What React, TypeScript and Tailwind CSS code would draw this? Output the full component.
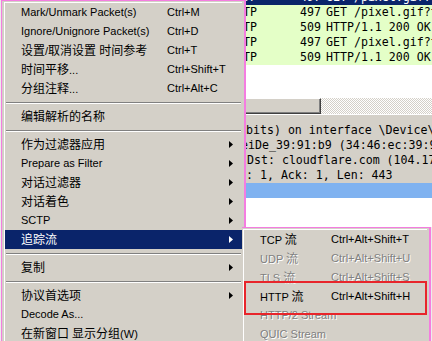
import React from 'react';

type Item =
  | { sep: true }
  | { sep?: false; label: string; keys?: string; sub?: boolean; active?: boolean; off?: boolean };

const mainItems: Item[] = [
  { label: 'Mark/Unmark Packet(s)', keys: 'Ctrl+M' },
  { label: 'Ignore/Unignore Packet(s)', keys: 'Ctrl+D' },
  { label: '设置/取消设置 时间参考', keys: 'Ctrl+T' },
  { label: '时间平移...', keys: 'Ctrl+Shift+T' },
  { label: '分组注释...', keys: 'Ctrl+Alt+C' },
  { sep: true },
  { label: '编辑解析的名称' },
  { sep: true },
  { label: '作为过滤器应用', sub: true },
  { label: 'Prepare as Filter', sub: true },
  { label: '对话过滤器', sub: true },
  { label: '对话着色', sub: true },
  { label: 'SCTP', sub: true },
  { label: '追踪流', sub: true, active: true },
  { sep: true },
  { label: '复制', sub: true },
  { sep: true },
  { label: '协议首选项', sub: true },
  { label: 'Decode As...' },
  { label: '在新窗口 显示分组(W)' },
];

const streamItems: Item[] = [
  { label: 'TCP 流', keys: 'Ctrl+Alt+Shift+T' },
  { label: 'UDP 流', keys: 'Ctrl+Alt+Shift+U', off: true },
  { label: 'TLS 流', keys: 'Ctrl+Alt+Shift+S', off: true },
  { label: 'HTTP 流', keys: 'Ctrl+Alt+Shift+H' },
  { label: 'HTTP/2 Stream', off: true },
  { label: 'QUIC Stream', off: true },
];

const packets = [
  { proto: 'HTTP', len: '497', info: 'GET /pixel.gif?type=log HTTP/1.1', sel: true },
  { proto: 'HTTP', len: '497', info: 'GET /pixel.gif?type=log HTTP/1.1' },
  { proto: 'HTTP', len: '509', info: 'HTTP/1.1 200 OK  (GIF89a)' },
  { proto: 'HTTP', len: '497', info: 'GET /pixel.gif?type=log HTTP/1.1' },
  { proto: 'HTTP', len: '509', info: 'HTTP/1.1 200 OK  (GIF89a)' },
];

const details = [
  { pad: 'pl-[246px]', text: 'bits) on interface \\Device\\NPF_{7B2E}' },
  { pad: 'pl-[241px]', text: 'eiDe_39:91:b9 (34:46:ec:39:91:b9)' },
  { pad: 'pl-[247px]', text: 'Dst: cloudflare.com (104.17.24.14)' },
  { pad: 'pl-[239px]', text: 'q: 1, Ack: 1, Len: 443' },
];

function Txt({ s }: { s: string }) {
  const parts = s.split(/([\u4e00-\u9fff]+)/);
  return (
    <>
      {parts.map((p, i) =>
        /[\u4e00-\u9fff]/.test(p) ? (
          <span key={i} className="text-[12px]">
            {p}
          </span>
        ) : (
          <React.Fragment key={i}>{p}</React.Fragment>
        )
      )}
    </>
  );
}

function Arrow() {
  return (
    <svg width="4" height="7" viewBox="0 0 4 7" className="ml-auto mr-[9px] shrink-0">
      <path d="M0 0L4 3.5L0 7Z" fill="currentColor" />
    </svg>
  );
}

function Separator() {
  return (
    <div className="flex h-[9px] items-center px-px">
      <div className="h-[2px] w-full border-t border-b border-t-[#808080] border-b-white" />
    </div>
  );
}

function MenuRow({ item, labelW, pad }: { item: Item; labelW: string; pad: string }) {
  if (item.sep) return <Separator />;
  const tone = item.active
    ? 'bg-[#0a246a] text-white'
    : item.off
      ? 'text-[#808080] [text-shadow:1px_1px_0_#ffffff]'
      : 'text-black';
  return (
    <div className={`flex h-[19px] items-center whitespace-nowrap leading-none ${pad} ${tone}`}>
      <span className={`${labelW} shrink-0`}>
        <Txt s={item.label} />
      </span>
      {item.keys && <span>{item.keys}</span>}
      {item.sub && <Arrow />}
    </div>
  );
}

export default function App() {
  return (
    <div className="relative h-[341px] w-[432px] overflow-hidden bg-white font-['Liberation_Sans','Noto_Sans_CJK_SC',sans-serif] text-[11px]">
      {/* wireshark window behind the menus */}
      <div className="flex h-full flex-col font-['DejaVu_Sans_Mono',monospace] text-[11.6px] leading-none">
        <div className="-mt-[10px]">
          {packets.map((p, i) => (
            <div
              key={i}
              className={`flex h-[15px] items-center whitespace-nowrap ${
                p.sel ? 'bg-[#0a246a] text-white' : 'bg-[#e4ffc7] text-black'
              }`}
            >
              <span className="w-[229px] shrink-0" />
              <span className="w-[28px] shrink-0">{p.proto}</span>
              <span className="w-[64px] shrink-0 text-right">{p.len}</span>
              <span className="ml-[5px]">{p.info}</span>
            </div>
          ))}
        </div>
        <div className="h-[33px] shrink-0 bg-white" />
        <div className="flex h-[16px] shrink-0">
          <div className="w-[321px] shrink-0 border border-t-white border-l-white border-r-[#404040] border-b-[#404040] bg-[#d4d0c8] shadow-[inset_-1px_-1px_0_#808080]" />
          <div className="flex-1 bg-[image:repeating-conic-gradient(#d4d0c8_0_25%,#ffffff_0_50%)] bg-[length:2px_2px]" />
        </div>
        <div className="shrink-0 border-t border-white bg-[#d4d0c8] pt-[8px] text-black">
          {details.map((d, i) => (
            <div key={i} className={`flex h-[15px] items-center whitespace-nowrap ${d.pad}`}>
              {d.text}
            </div>
          ))}
          <div className="h-[15px] bg-[#7fb2f0]" />
        </div>
        <div className="flex-1 bg-white" />
      </div>

      {/* context menu */}
      <div className="absolute left-0 top-0 h-[360px] w-[246px] bg-[#ececec] pl-px">
        <div className="h-full border-t border-l border-r-2 border-[#f47de0] bg-[#d4d0c8] pt-px pl-[2px] pr-[2px]">
          <div className="h-full border-t border-l border-white">
            {mainItems.map((it, i) => (
              <MenuRow key={i} item={it} labelW="w-[146px]" pad="pl-[16px]" />
            ))}
          </div>
        </div>
      </div>

      {/* follow stream submenu */}
      <div className="absolute left-[242px] top-[227px] h-[130px] w-[190px] bg-[#ececec] pr-px">
        <div className="h-full border-t border-r-2 border-[#f47de0] bg-[#d4d0c8] pt-px pl-px pr-[2px]">
          <div className="h-full border-t border-l border-white">
            {streamItems.map((it, i) => (
              <MenuRow key={i} item={it} labelW="w-[71px]" pad="pl-[16px]" />
            ))}
          </div>
        </div>
      </div>

      {/* annotation */}
      <div className="absolute left-[244px] top-[281px] h-[34px] w-[183px] border-2 border-[#e8252b]" />
    </div>
  );
}
